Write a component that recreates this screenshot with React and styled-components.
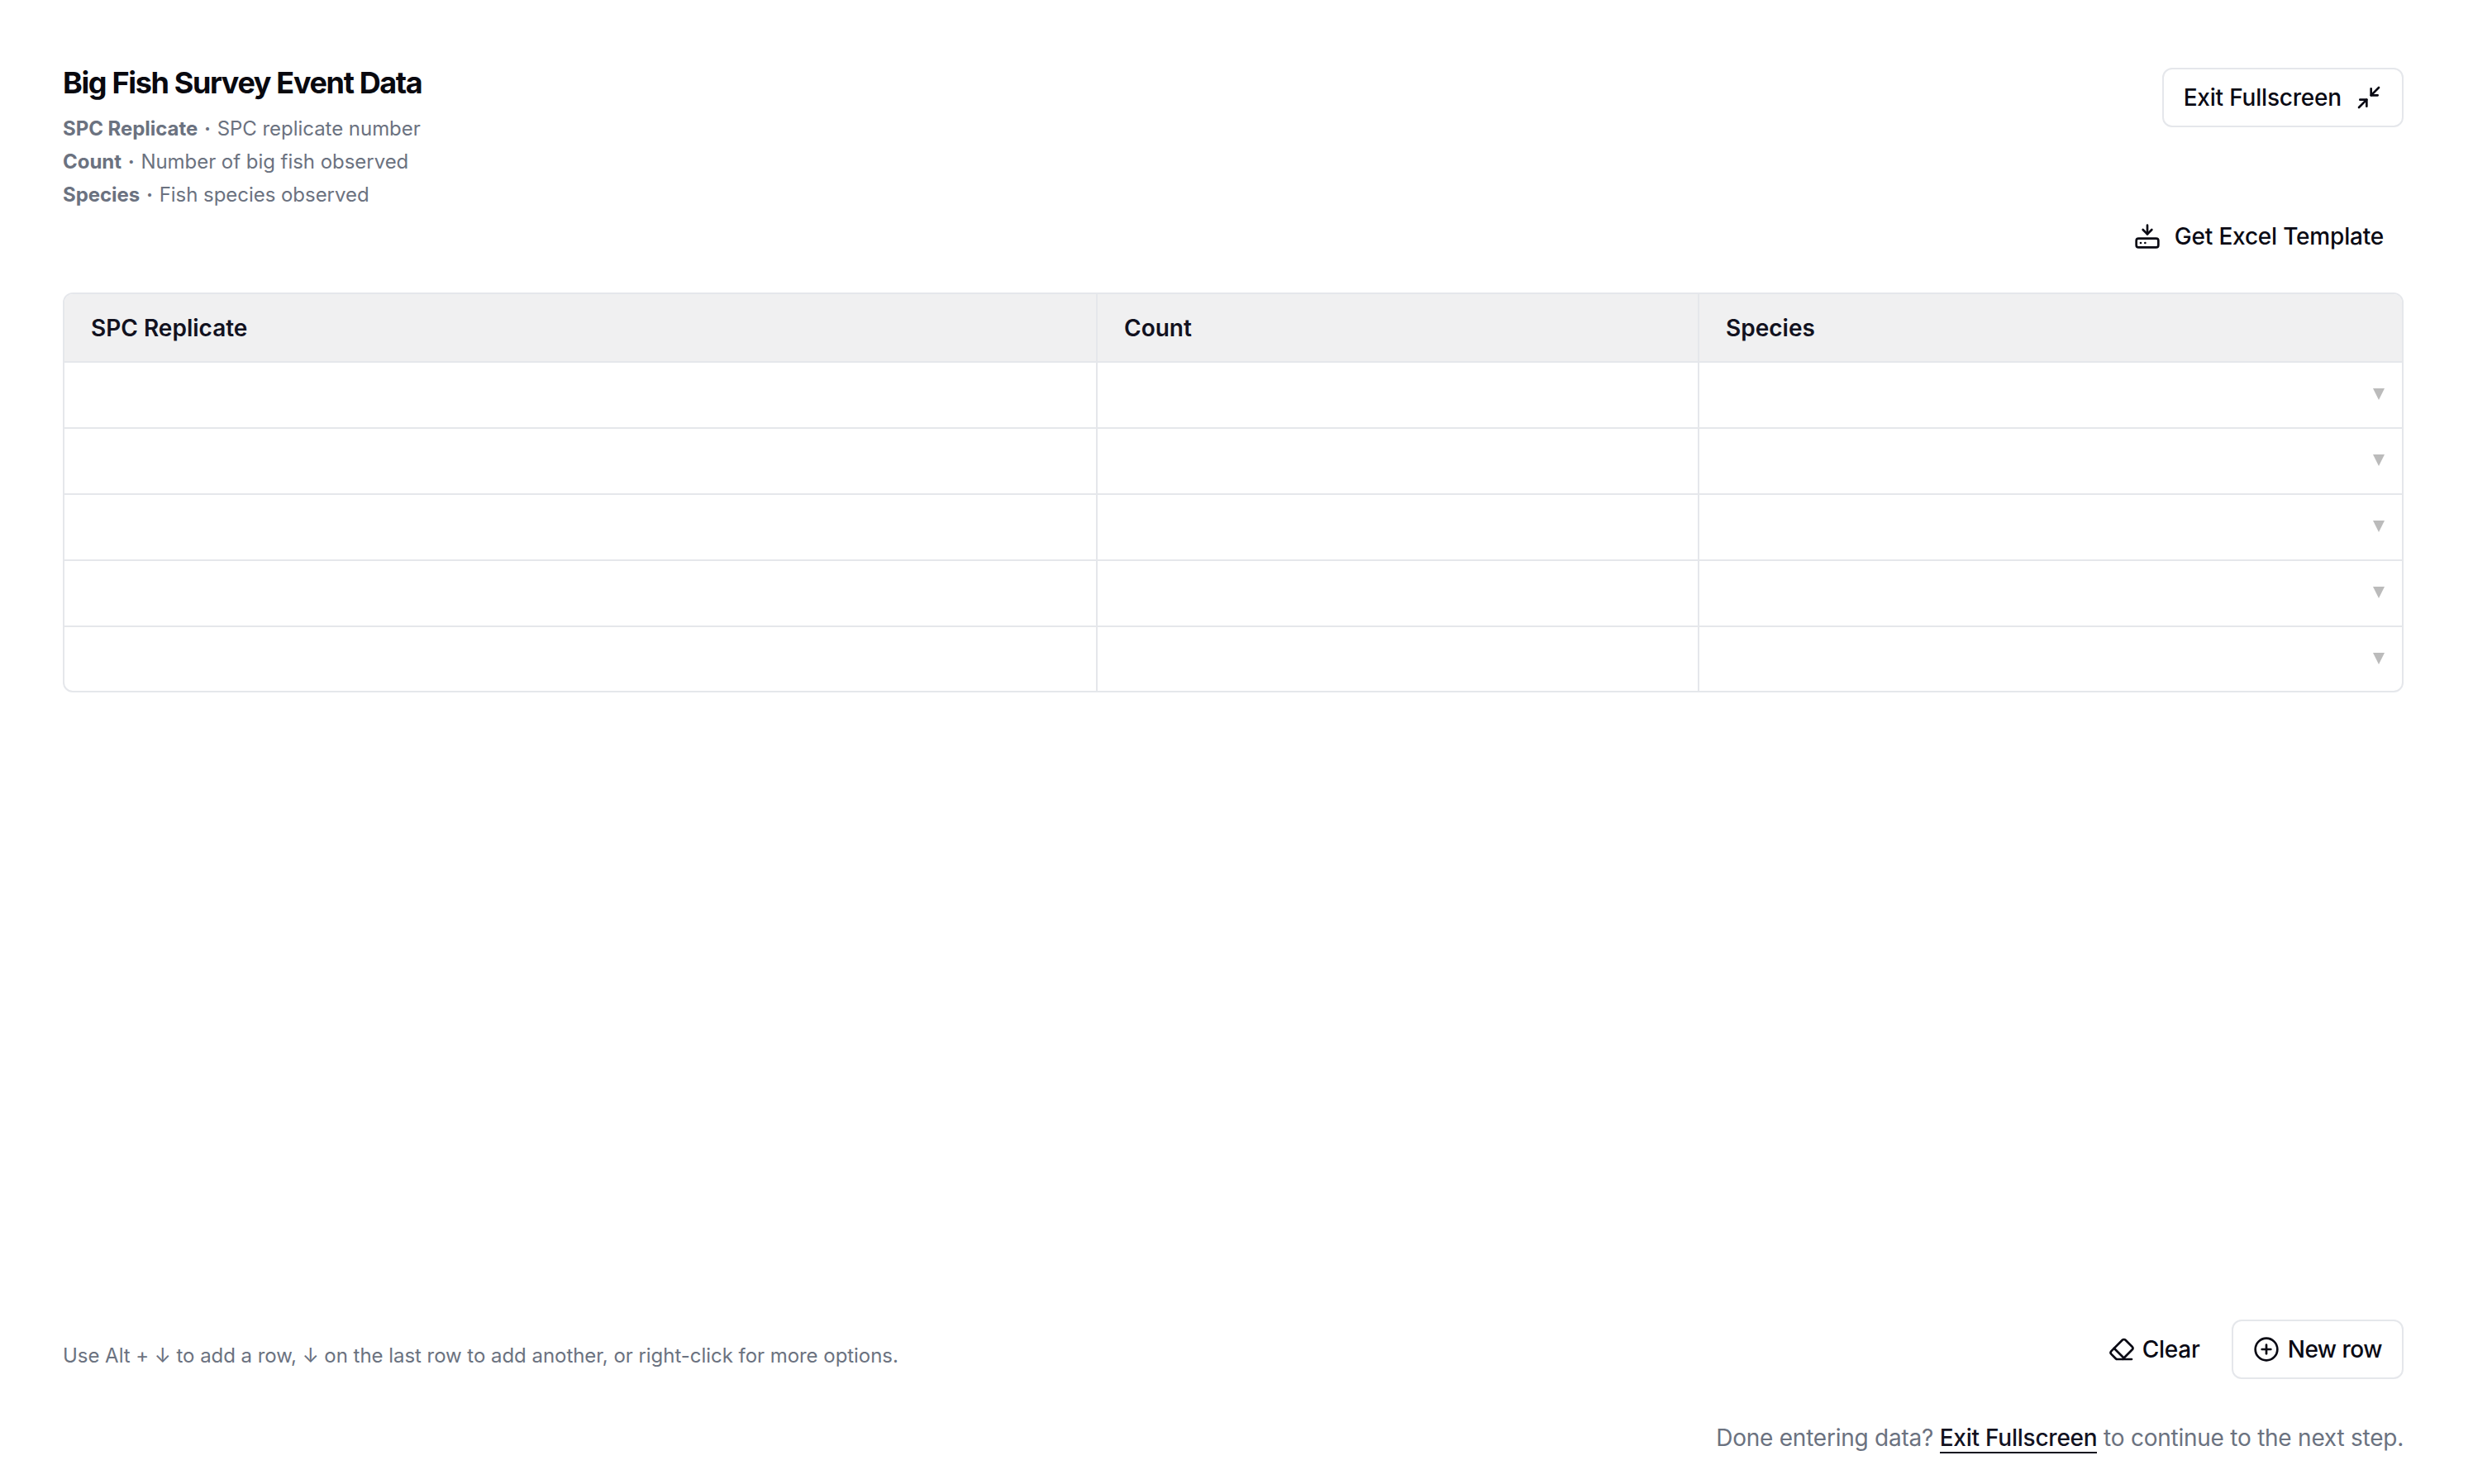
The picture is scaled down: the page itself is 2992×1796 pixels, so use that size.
import React from 'react'
import styled, {createGlobalStyle} from 'styled-components'
import {Minimize2, HardDriveDownload, Eraser, CirclePlus} from 'lucide-react'

const rows = [0, 1, 2, 3, 4]
const columns = ['SPC Replicate', 'Count', 'Species']
const legend = [
  {name: 'SPC Replicate', text: 'SPC replicate number'},
  {name: 'Count', text: 'Number of big fish observed'},
  {name: 'Species', text: 'Fish species observed'},
]

const App = () => {
  return (
    <Page>
      <GlobalStyle />
      <Header>
        <div>
          <Title>Big Fish Survey Event Data</Title>
          {legend.map(item => (
            <LegendLine key={item.name}>
              <strong>{item.name}</strong> <Dot>·</Dot> {item.text}
            </LegendLine>
          ))}
        </div>
        <ExitButton>
          Exit Fullscreen
          <Minimize2 size={32} strokeWidth={2} />
        </ExitButton>
      </Header>

      <TemplateBar>
        <GhostButton>
          <HardDriveDownload size={32} strokeWidth={2} />
          Get Excel Template
        </GhostButton>
      </TemplateBar>

      <Table>
        <HeadRow>
          {columns.map(name => <HeadCell key={name}>{name}</HeadCell>)}
        </HeadRow>
        {rows.map(row => (
          <BodyRow key={row}>
            <Cell />
            <Cell />
            <Cell><DropArrow /></Cell>
          </BodyRow>
        ))}
      </Table>

      <Footer>
        <FooterBar>
          <Hint>Use Alt + ↓ to add a row, ↓ on the last row to add another, or right-click for more options.</Hint>
          <Actions>
            <GhostButton $small>
              <Eraser size={32} strokeWidth={2} />
              Clear
            </GhostButton>
            <NewRowButton>
              <CirclePlus size={32} strokeWidth={2} />
              New row
            </NewRowButton>
          </Actions>
        </FooterBar>
        <DoneLine>
          Done entering data? <DoneLink>Exit Fullscreen</DoneLink> to continue to the next step.
        </DoneLine>
      </Footer>
    </Page>
  )
}

// ///// Style ////////
const GlobalStyle = createGlobalStyle`
  html, body {
    margin: 0;
    padding: 0;
    background: #ffffff;
  }
  body {
    font-family: Inter, "Liberation Sans", sans-serif;
    font-optical-sizing: none;
    -webkit-font-smoothing: antialiased;
  }
`
const Page = styled.div`
  box-sizing: border-box;
  height: 1796px;
  padding: 80px 84px 0 76px;
  display: flex;
  flex-direction: column;
  color: #0a0a14;
`

// Top ============
const Header = styled.div`
  display: flex;
  justify-content: space-between;
  align-items: flex-start;
`
const Title = styled.h1`
  margin: 0 0 16px;
  font-size: 36px;
  line-height: 40px;
  font-weight: 700;
  letter-spacing: -1.35px;
  color: #09090f;
`
const LegendLine = styled.div`
  font-size: 24px;
  line-height: 40px;
  letter-spacing: -0.04px;
  color: #6b7280;
  strong { font-weight: 700; }
`
const Dot = styled.span`
  font-weight: 700;
  margin: 0 1px;
`
const BaseButton = styled.button`
  box-sizing: border-box;
  height: 72px;
  display: inline-flex;
  align-items: center;
  font-family: inherit;
  font-size: 28px;
  font-weight: 500;
  letter-spacing: -0.2px;
  color: #0a0a14;
  background: #ffffff;
  cursor: pointer;
`
const OutlineButton = styled(BaseButton)`
  padding: 0 24px;
  gap: 10px;
  border: 2px solid #e5e7eb;
  border-radius: 12px;
`
const ExitButton = styled(OutlineButton)`
  margin-top: 2px;
  gap: 17px;
`
const NewRowButton = styled(OutlineButton)`
  letter-spacing: -0.5px;
`
const GhostButton = styled(BaseButton)`
  border: 0;
  border-radius: 12px;
  padding: 0 24px;
  gap: ${p => (p.$small ? '9px' : '17px')};
`
const TemplateBar = styled.div`
  display: flex;
  justify-content: flex-end;
  margin-top: -6px;
`

// Table ============
const Table = styled.div`
  margin-top: 32px;
  border: 2px solid #e5e7eb;
  border-radius: 12px;
  overflow: hidden;
`
const Row = styled.div`
  display: grid;
  grid-template-columns: 1248px 728px 1fr;
`
const HeadRow = styled(Row)`
  height: 81px;
  background: #f0f0f1;
`
const BodyRow = styled(Row)`
  height: 80px;
  box-sizing: border-box;
  border-top: 2px solid #e5e7eb;
  &:last-child { height: 79px; }
`
const HeadCell = styled.div`
  display: flex;
  align-items: center;
  padding-left: 32px;
  font-size: 28px;
  font-weight: 600;
  color: #12121f;
  & + & { border-left: 2px solid #e5e7eb; }
`
const Cell = styled.div`
  display: flex;
  align-items: center;
  justify-content: flex-end;
  padding-right: 21px;
  & + & { border-left: 2px solid #e5e7eb; }
`
const DropArrow = styled.span`
  width: 0;
  height: 0;
  margin-bottom: 2px;
  border-left: 7px solid transparent;
  border-right: 7px solid transparent;
  border-top: 14px solid #bbbbbb;
`

// Bottom ============
const Footer = styled.div`
  margin-top: auto;
  padding-bottom: 36px;
`
const FooterBar = styled.div`
  display: flex;
  justify-content: space-between;
  align-items: center;
`
const Hint = styled.div`
  font-size: 24px;
  line-height: 32px;
  margin-top: 16px;
  letter-spacing: -0.04px;
  color: #6b7280;
`
const Actions = styled.div`
  display: flex;
  align-items: center;
  gap: 14px;
`
const DoneLine = styled.div`
  margin-top: 51px;
  text-align: right;
  font-size: 28px;
  line-height: 40px;
  letter-spacing: -0.24px;
  color: #6b7280;
`
const DoneLink = styled.a`
  color: #12121f;
  font-weight: 500;
  border-bottom: 2px solid #12121f;
  cursor: pointer;
`

export default App
